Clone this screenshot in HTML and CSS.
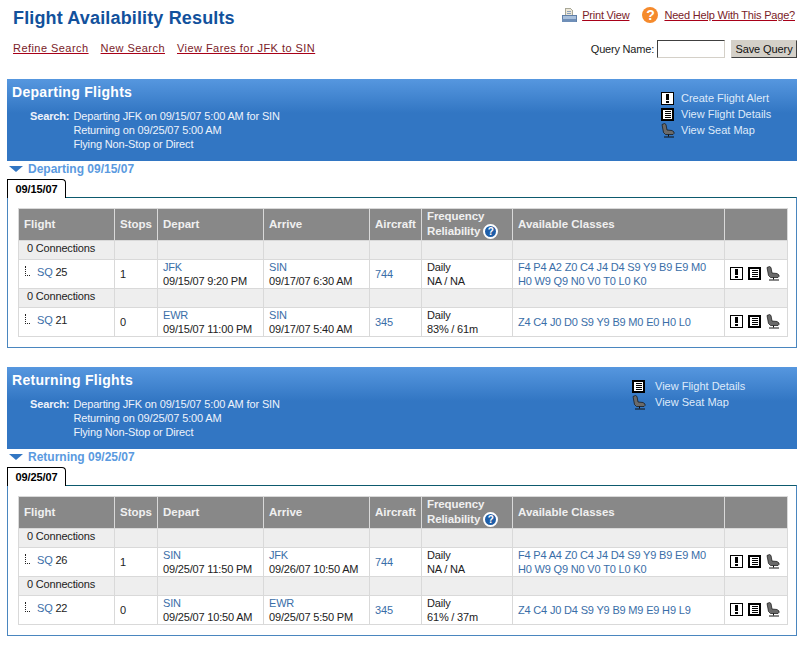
FILE: index.html
```html
<!DOCTYPE html>
<html lang="en">
<head>
    <meta charset="UTF-8">
    <title>Flight Availability Results</title>
    <link rel="stylesheet" href="styles.css">
</head>
<body>
    <svg class="defs" width="0" height="0">
        <symbol id="ico-alert" viewBox="0 0 13 13">
            <rect x="0.5" y="0.5" width="12" height="12" fill="#fff" stroke="#000"/>
            <rect x="5" y="2" width="3" height="6" fill="#000"/>
            <rect x="5" y="9" width="3" height="2" fill="#000"/>
        </symbol>
        <symbol id="ico-details" viewBox="0 0 13 13">
            <rect x="1" y="1" width="11" height="11" fill="#fff" stroke="#000" stroke-width="2"/>
            <path d="M4 3.500h6M4 5.500h6M4 7.500h6M4 9.500h6" stroke="#000" fill="none"/>
        </symbol>
        <symbol id="ico-seat" viewBox="0 0 14 15">
            <path d="M1 1.500 L3.500 .5 L5 1.500 L6 7 L11 7.500 L13 9 L13 10.500 L12 11.500 L4.500 11.500 L2.500 9.500 Z" fill="#6a6a6a" stroke="#111" stroke-width=".7"/>
            <path d="M7.500 11.500v2M3 14h10" stroke="#111" fill="none"/>
        </symbol>
    </svg>

    <div class="top">
        <h1>Flight Availability Results</h1>
        <div class="top-links">
            <svg class="print-icon" width="16" height="15" viewBox="0 0 16 15">
                <path d="M4.500 .5h5l2 2v5h-7z" fill="#eee8d8" stroke="#a8a898"/>
                <path d="M6 3h4M6 5h4" stroke="#8aa0bc"/>
                <path d="M1 7h14v6.500h-14z" fill="#a9c0dc" stroke="#5f7fa8"/>
                <path d="M1 11h14v3h-14z" fill="#6f8fb8"/>
            </svg>
            <a href="#" class="red-link print-link">Print View</a>
            <span class="help-icon">?</span>
            <a href="#" class="red-link">Need Help With This Page?</a>
        </div>
    </div>

    <div class="subnav">
        <div class="nav-links">
            <a href="#" class="red-link">Refine Search</a>
            <a href="#" class="red-link">New Search</a>
            <a href="#" class="red-link">View Fares for JFK to SIN</a>
        </div>
        <div class="query">
            <label for="q">Query Name:</label>
            <input id="q" type="text">
            <button type="button">Save Query</button>
        </div>
    </div>

    <section class="flights">
        <div class="band">
            <div class="band-left">
                <h2>Departing Flights</h2>
                <div class="search-info">
                    <strong>Search:</strong>
                    <div>Departing JFK on 09/15/07 5:00 AM for SIN<br>Returning on 09/25/07 5:00 AM<br>Flying Non-Stop or Direct</div>
                </div>
            </div>
            <ul class="band-actions">
                <li><svg width="13" height="13"><use href="#ico-alert"/></svg>Create Flight Alert</li>
                <li><svg width="13" height="13"><use href="#ico-details"/></svg>View Flight Details</li>
                <li><svg class="seat" width="14" height="15"><use href="#ico-seat"/></svg>View Seat Map</li>
            </ul>
        </div>
        <div class="date-head"><span class="arrow"></span>Departing 09/15/07</div>
        <div class="tab">09/15/07</div>
        <div class="panel">
            <table>
                <colgroup>
                    <col class="c-flight"><col class="c-stops"><col class="c-place"><col class="c-place"><col class="c-craft"><col class="c-freq"><col class="c-classes"><col class="c-icons">
                </colgroup>
                <tr class="head">
                    <th>Flight</th><th>Stops</th><th>Depart</th><th>Arrive</th><th>Aircraft</th>
                    <th class="freq">Frequency<br>Reliability <span class="q-icon">?</span></th>
                    <th>Available Classes</th><th></th>
                </tr>
                <tr class="conn"><td class="conn-label">0 Connections</td><td></td><td></td><td></td><td></td><td></td><td></td><td></td></tr>
                <tr class="row">
                    <td class="flight"><span class="tree"></span><a href="#">SQ</a> 25</td>
                    <td>1</td>
                    <td><a href="#">JFK</a><br>09/15/07 9:20 PM</td>
                    <td><a href="#">SIN</a><br>09/17/07 6:30 AM</td>
                    <td><a href="#">744</a></td>
                    <td>Daily<br>NA / NA</td>
                    <td><a href="#">F4 P4 A2 Z0 C4 J4 D4 S9 Y9 B9 E9 M0<br>H0 W9 Q9 N0 V0 T0 L0 K0</a></td>
                    <td class="icons"><svg width="13" height="13"><use href="#ico-alert"/></svg><svg width="13" height="13"><use href="#ico-details"/></svg><svg class="seat" width="14" height="15"><use href="#ico-seat"/></svg></td>
                </tr>
                <tr class="conn"><td class="conn-label">0 Connections</td><td></td><td></td><td></td><td></td><td></td><td></td><td></td></tr>
                <tr class="row">
                    <td class="flight"><span class="tree"></span><a href="#">SQ</a> 21</td>
                    <td>0</td>
                    <td><a href="#">EWR</a><br>09/15/07 11:00 PM</td>
                    <td><a href="#">SIN</a><br>09/17/07 5:40 AM</td>
                    <td><a href="#">345</a></td>
                    <td>Daily<br>83% / 61m</td>
                    <td><a href="#">Z4 C4 J0 D0 S9 Y9 B9 M0 E0 H0 L0</a></td>
                    <td class="icons"><svg width="13" height="13"><use href="#ico-alert"/></svg><svg width="13" height="13"><use href="#ico-details"/></svg><svg class="seat" width="14" height="15"><use href="#ico-seat"/></svg></td>
                </tr>
            </table>
        </div>
    </section>

    <section class="flights">
        <div class="band">
            <div class="band-left">
                <h2>Returning Flights</h2>
                <div class="search-info">
                    <strong>Search:</strong>
                    <div>Departing JFK on 09/15/07 5:00 AM for SIN<br>Returning on 09/25/07 5:00 AM<br>Flying Non-Stop or Direct</div>
                </div>
            </div>
            <ul class="band-actions return-actions">
                <li><svg width="13" height="13"><use href="#ico-details"/></svg>View Flight Details</li>
                <li><svg class="seat" width="14" height="15"><use href="#ico-seat"/></svg>View Seat Map</li>
            </ul>
        </div>
        <div class="date-head"><span class="arrow"></span>Returning 09/25/07</div>
        <div class="tab">09/25/07</div>
        <div class="panel">
            <table>
                <colgroup>
                    <col class="c-flight"><col class="c-stops"><col class="c-place"><col class="c-place"><col class="c-craft"><col class="c-freq"><col class="c-classes"><col class="c-icons">
                </colgroup>
                <tr class="head">
                    <th>Flight</th><th>Stops</th><th>Depart</th><th>Arrive</th><th>Aircraft</th>
                    <th class="freq">Frequency<br>Reliability <span class="q-icon">?</span></th>
                    <th>Available Classes</th><th></th>
                </tr>
                <tr class="conn"><td class="conn-label">0 Connections</td><td></td><td></td><td></td><td></td><td></td><td></td><td></td></tr>
                <tr class="row">
                    <td class="flight"><span class="tree"></span><a href="#">SQ</a> 26</td>
                    <td>1</td>
                    <td><a href="#">SIN</a><br>09/25/07 11:50 PM</td>
                    <td><a href="#">JFK</a><br>09/26/07 10:50 AM</td>
                    <td><a href="#">744</a></td>
                    <td>Daily<br>NA / NA</td>
                    <td><a href="#">F4 P4 A4 Z0 C4 J4 D4 S9 Y9 B9 E9 M0<br>H0 W9 Q9 N0 V0 T0 L0 K0</a></td>
                    <td class="icons"><svg width="13" height="13"><use href="#ico-alert"/></svg><svg width="13" height="13"><use href="#ico-details"/></svg><svg class="seat" width="14" height="15"><use href="#ico-seat"/></svg></td>
                </tr>
                <tr class="conn"><td class="conn-label">0 Connections</td><td></td><td></td><td></td><td></td><td></td><td></td><td></td></tr>
                <tr class="row">
                    <td class="flight"><span class="tree"></span><a href="#">SQ</a> 22</td>
                    <td>0</td>
                    <td><a href="#">SIN</a><br>09/25/07 10:50 AM</td>
                    <td><a href="#">EWR</a><br>09/25/07 5:50 PM</td>
                    <td><a href="#">345</a></td>
                    <td>Daily<br>61% / 37m</td>
                    <td><a href="#">Z4 C4 J0 D4 S9 Y9 B9 M9 E9 H9 L9</a></td>
                    <td class="icons"><svg width="13" height="13"><use href="#ico-alert"/></svg><svg width="13" height="13"><use href="#ico-details"/></svg><svg class="seat" width="14" height="15"><use href="#ico-seat"/></svg></td>
                </tr>
            </table>
        </div>
    </section>
</body>
</html>
```

FILE: styles.css
```css
* {
    margin: 0;
    padding: 0;
    box-sizing: border-box;
}

body {
    font-family: "Liberation Sans", Arial, sans-serif;
    font-size: 11px;
    color: #222;
    background: #fff;
    width: 805px;
    padding: 0 8px 0 7px;
}

.defs {
    position: absolute;
}

svg {
    shape-rendering: crispEdges;
}

svg.seat {
    shape-rendering: auto;
}

a {
    color: #3a6ea8;
    text-decoration: none;
}

.top {
    display: flex;
    justify-content: space-between;
    height: 40px;
    padding: 7px 2px 0 6px;
}

h1 {
    font-size: 18px;
    line-height: 23px;
    letter-spacing: 0.15px;
    color: #12519c;
}

.red-link {
    font-size: 11px;
    letter-spacing: 0.45px;
    color: #7a1c28;
    text-decoration: underline;
    text-decoration-color: #a80018;
}

.top-links {
    display: flex;
    align-items: center;
    height: 16px;
}

.top-links .red-link {
    letter-spacing: -0.2px;
}

.print-icon {
    margin-right: 5px;
}

.top-links .print-link {
    margin-right: 13px;
}

.help-icon {
    width: 16px;
    height: 16px;
    margin-right: 6px;
    border-radius: 50%;
    background: #f58a2c;
    color: #fff;
    font-size: 14px;
    font-weight: bold;
    line-height: 16px;
    text-align: center;
}

.subnav {
    display: flex;
    justify-content: space-between;
    align-items: center;
    height: 18px;
    padding-left: 6px;
}

.nav-links {
    display: flex;
    gap: 12px;
    padding-bottom: 2px;
}

.query {
    display: flex;
    align-items: center;
    letter-spacing: -0.2px;
}

.query input {
    width: 68px;
    height: 18px;
    margin: 0 6px 0 3px;
    border: 1px solid #d4d0c8;
    border-top-color: #404040;
    border-left-color: #404040;
    background: #fff;
}

.query button {
    width: 66px;
    height: 18px;
    border: 1px solid #d4d0c8;
    border-right-color: #404040;
    border-bottom-color: #404040;
    background: #d4d0c8;
    color: #111;
    font-family: inherit;
    font-size: 11px;
    letter-spacing: -0.1px;
}

.flights {
    margin-top: 21px;
}

.flights + .flights {
    margin-top: 19px;
}

.band {
    display: flex;
    justify-content: space-between;
    height: 82px;
    background: linear-gradient(#5697df 0, #3276c3 34px);
    color: #eef3fb;
}

.band-left {
    padding: 5px 0 0 5px;
}

h2 {
    font-size: 14px;
    line-height: 17px;
    color: #fff;
    letter-spacing: 0.3px;
}

.search-info {
    display: flex;
    gap: 4px;
    margin-top: 8px;
    padding-left: 18px;
    line-height: 14px;
    letter-spacing: -0.14px;
}

.band-actions {
    list-style: none;
    width: 136px;
    padding-top: 11px;
    color: #dfeafa;
}

.band-actions li {
    display: flex;
    align-items: center;
    gap: 7px;
    height: 16px;
}

.band-actions .seat {
    margin-right: -1px;
}

.return-actions {
    width: 165px;
}

.return-actions li {
    gap: 10px;
}

.date-head {
    display: flex;
    align-items: center;
    height: 16px;
    padding-left: 2px;
    color: #5a9ae0;
    font-size: 12px;
    font-weight: bold;
}

.arrow {
    width: 0;
    height: 0;
    margin-right: 5px;
    border-left: 7px solid transparent;
    border-right: 7px solid transparent;
    border-top: 6px solid #3276c3;
}

.tab {
    position: relative;
    z-index: 1;
    width: 59px;
    height: 19px;
    margin-top: 2px;
    margin-bottom: -1px;
    border: 1px solid #000;
    border-bottom: 0;
    border-top-right-radius: 4px;
    background: #fff;
    color: #000;
    font-weight: bold;
    letter-spacing: -0.1px;
    line-height: 18px;
    text-align: center;
}

.panel {
    height: 151px;
    padding: 10px 10px 0;
    border: 1px solid #4a86bf;
    border-top-color: #0d5a6e;
}

table {
    width: 769px;
    table-layout: fixed;
    border-collapse: collapse;
}

th, td {
    border: 1px solid #d9d9d9;
    padding: 0 5px;
    text-align: left;
    font-weight: normal;
    font-size: 11px;
    line-height: 14px;
    letter-spacing: -0.18px;
    white-space: nowrap;
}

.c-flight { width: 96px; }
.c-stops { width: 43px; }
.c-place { width: 106px; }
.c-craft { width: 52px; }
.c-freq { width: 91px; }
.c-classes { width: 212px; }
.c-icons { width: 63px; }

.head {
    height: 32px;
}

.head th {
    background: #888;
    color: #f0f0f0;
    font-weight: bold;
    font-size: 11.500px;
    letter-spacing: 0;
    padding-bottom: 2px;
}

.head .freq {
    line-height: 15px;
    letter-spacing: -0.1px;
    padding-bottom: 1px;
}

.q-icon {
    display: inline-block;
    width: 15px;
    height: 15px;
    margin: -3px 0;
    border-radius: 50%;
    background: #1e5ea8;
    border: 2px solid #fff;
    color: #fff;
    font-size: 10px;
    line-height: 11px;
    text-align: center;
}

.conn {
    height: 19px;
}

.conn td {
    background: #eee;
}

.conn .conn-label {
    padding-left: 8px;
    padding-bottom: 4px;
}

.row {
    height: 29px;
}

.row .flight {
    padding: 0 5px 5px 6px;
}

.tree {
    display: inline-block;
    width: 5px;
    height: 10px;
    margin-right: 7px;
    border-left: 1px dotted #222;
    border-bottom: 1px dotted #222;
}

.icons svg {
    margin-right: 5px;
    vertical-align: middle;
}

.row .icons {
    padding: 0 0 2px 5px;
    font-size: 0;
}
```
